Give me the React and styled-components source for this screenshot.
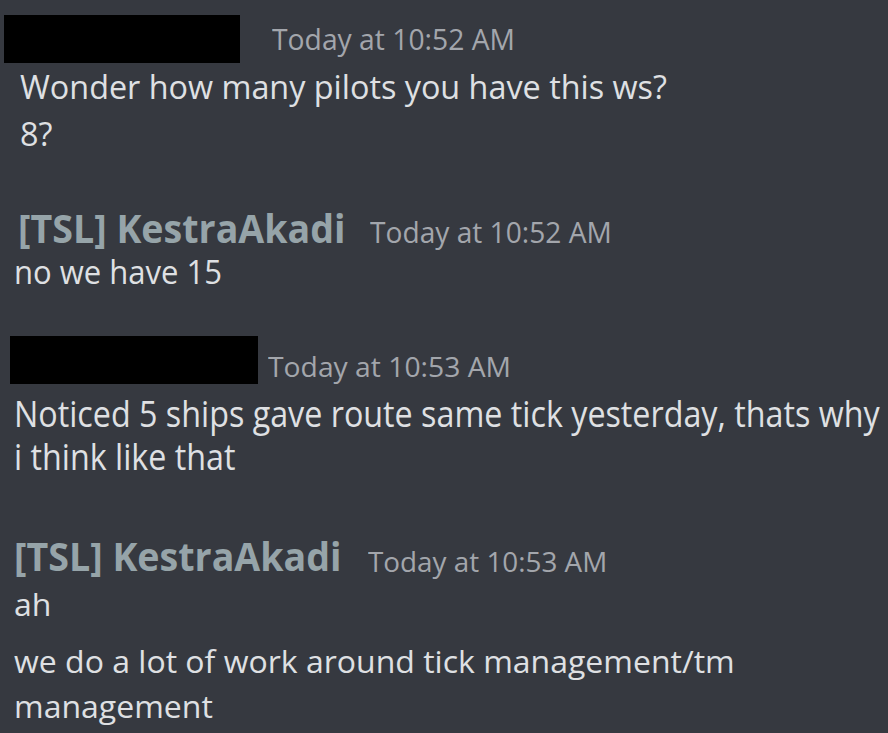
import React from "react";
import styled, { createGlobalStyle } from "styled-components";

const GlobalStyle = createGlobalStyle`
  html, body {
    margin: 0;
    padding: 0;
    background: #363940;
  }
  body {
    font-family: "Open Sans", "Noto Sans", sans-serif;
  }
`;

const Chat = styled.div`
  width: 888px;
  height: 733px;
  overflow: hidden;
  background: #363940;
  display: flex;
  flex-direction: column;
`;

// one message group: header row + body lines
const Group = styled.div`
  display: flex;
  flex-direction: column;
  padding-left: ${(p) => p.indent || 0}px;
  margin-top: ${(p) => p.top || 0}px;
`;

const Header = styled.div`
  display: flex;
  align-items: ${(p) => p.align || "center"};
  gap: ${(p) => p.gap || 26}px;
  height: ${(p) => p.h || 50}px;
  margin-left: ${(p) => p.shift || 0}px;
`;

const Redacted = styled.div`
  width: ${(p) => p.w}px;
  height: 48px;
  background: #000;
  flex: none;
`;

const Name = styled.span`
  font-size: 39px;
  font-weight: 700;
  color: #96a4a9;
  white-space: nowrap;
  display: inline-block;
  width: ${(p) => p.w}px;
  transform: scaleX(${(p) => p.sx || 1});
  transform-origin: left center;
`;

const Stamp = styled.span`
  font-size: 29px;
  color: #a3a6ac;
  white-space: nowrap;
  display: inline-block;
  transform: scale(${(p) => p.sx || 1}, ${(p) => p.sy || 1});
  transform-origin: left bottom;
`;

const Line = styled.div`
  font-size: ${(p) => p.size || 32}px;
  color: #dfe0e3;
  white-space: nowrap;
  height: ${(p) => p.h || 44}px;
  line-height: ${(p) => p.h || 44}px;
  margin-top: ${(p) => p.top || 0}px;
  transform: scale(${(p) => p.sx || 1}, ${(p) => p.sy || 1});
  transform-origin: left center;
`;

export default function App() {
  return (
    <Chat>
      <GlobalStyle />

      <Group indent={4} top={14}>
        <Header gap={32} h={49}>
          <Redacted w={236} />
          <Stamp sx={0.975}>Today at 10:52 AM</Stamp>
        </Header>
        <Group indent={16}>
          <Line size={33} h={47} sx={0.98}>Wonder how many pilots you have this ws?</Line>
          <Line size={33} h={47} sx={0.98}>8?</Line>
        </Group>
      </Group>

      <Group indent={14} top={44}>
        <Header align="baseline" gap={26} h={50} shift={4}>
          <Name w={326} sx={0.964}>[TSL] KestraAkadi</Name>
          <Stamp sx={0.97}>Today at 10:52 AM</Stamp>
        </Header>
        <Line h={42} sx={0.97}>no we have 15</Line>
      </Group>

      <Group indent={10} top={43}>
        <Header align="flex-end" gap={10} h={48}>
          <Redacted w={248} />
          <Stamp sx={0.975} sy={0.92}>Today at 10:53 AM</Stamp>
        </Header>
        <Group indent={4} top={7}>
          <Line size={37} h={43} sx={0.872}>
            Noticed 5 ships gave route same tick yesterday, thats why
          </Line>
          <Line size={37} h={43} sx={0.872}>i think like that</Line>
        </Group>
      </Group>

      <Group indent={14} top={52}>
        <Header align="baseline" gap={28} h={50}>
          <Name w={326} sx={0.964}>[TSL] KestraAkadi</Name>
          <Stamp sx={0.96} sy={0.92}>Today at 10:53 AM</Stamp>
        </Header>
        <Line h={44} sy={0.95} top={4}>ah</Line>
        <Line h={45} sy={0.95} top={12}>
          we do a lot of work around tick management/tm
        </Line>
        <Line h={45} sy={0.95}>management</Line>
      </Group>
    </Chat>
  );
}
